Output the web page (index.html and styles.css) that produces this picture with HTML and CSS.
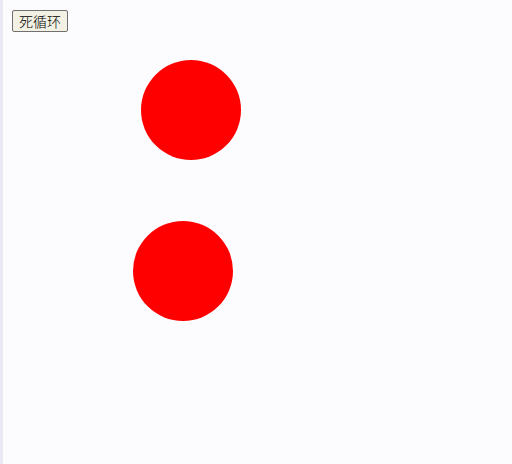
FILE: index.html
```html
<!DOCTYPE html>
<html>
<head>
<meta charset="utf-8">
<link rel="stylesheet" href="styles.css">
</head>
<body>
<div class="page">
  <button class="btn">死循环</button>
  <div class="ball ball-one"></div>
  <div class="ball ball-two"></div>
</div>
</body>
</html>
```
FILE: styles.css
```css
html, body {
  margin: 0;
  padding: 0;
  width: 512px;
  height: 464px;
  overflow: hidden;
  background: #fcfcff;
}
.page {
  box-sizing: border-box;
  height: 464px;
  padding: 10px 0 0 9px;
  border-left: 3px solid #ebe8f6;
  display: flex;
  flex-direction: column;
  align-items: flex-start;
  margin: 0;
}
.btn {
  font-family: "Noto Sans CJK SC", "Liberation Sans", sans-serif;
  font-size: 14px;
  font-weight: 300;
  line-height: 15px;
  height: 22px;
  width: 56px;
  padding: 0 3px;
  background: #f2f1e4;
  color: #000;
  border: 1px solid #707070;
  border-radius: 2px;
}
.ball {
  width: 100px;
  height: 100px;
  border-radius: 50%;
  background: #ff0000;
}
.ball-one {
  margin-top: 28px;
  margin-left: 129px;
}
.ball-two {
  margin-top: 61px;
  margin-left: 121px;
}
```
